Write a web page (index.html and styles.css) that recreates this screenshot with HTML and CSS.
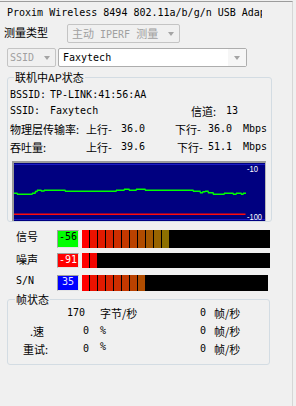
FILE: index.html
```html
<!DOCTYPE html>
<html lang="zh">
<head>
<meta charset="utf-8">
<title>Proxim Wireless</title>
<link rel="stylesheet" href="styles.css">
</head>
<body>
<div class="win">
  <div class="title">Proxim Wireless 8494 802.11a/b/g/n USB Adapter</div>

  <div class="row-mode">
    <span class="z lbl-mode">测量类型</span>
    <div class="combo dis combo-mode">
      <span class="cval"><span class="z">主动</span> IPERF <span class="z">测量</span></span>
      <span class="cbtn"><i class="arrow"></i></span>
    </div>
  </div>

  <div class="row-ssid">
    <div class="combo dis combo-ssid">
      <span class="cval">SSID</span>
      <span class="cbtn"><i class="arrow"></i></span>
    </div>
    <div class="combo combo-name">
      <span class="cval">Faxytech</span>
      <span class="cbtn btn-name"><i class="arrow"></i></span>
    </div>
  </div>

  <fieldset class="grp grp-ap">
    <legend class="z">联机中AP状态</legend>
    <div class="ap-row"><span class="w40">BSSID:</span><span>TP-LINK:41:56:AA</span></div>
    <div class="ap-row"><span class="w40">SSID:</span><span class="w141">Faxytech</span><span class="z w35">信道:</span><span>13</span></div>
    <div class="ap-row gap"><span class="z w76">物理层传输率:</span><span class="z w35">上行-</span><span class="w54">36.0</span><span class="z w33">下行-</span><span class="w35">36.0</span><span>Mbps</span></div>
    <div class="ap-row gap"><span class="z w76">吞吐量:</span><span class="z w35">上行-</span><span class="w56">39.6</span><span class="z w31">下行-</span><span class="w35">51.1</span><span>Mbps</span></div>
    <div class="graph">
      <svg class="plot" width="251" height="58" viewBox="14 163 251 58">
        <line x1="14" y1="164.5" x2="265" y2="164.5" stroke="#1c1cc4" stroke-width="1"/>
        <line x1="14" y1="219.5" x2="265" y2="219.5" stroke="#1c1cc4" stroke-width="1"/>
        <line x1="14" y1="214.2" x2="245.5" y2="214.2" stroke="#ff0a0a" stroke-width="1.5"/>
        <polyline fill="none" stroke="#00ff00" stroke-width="1.4" points="14,193.3 17,193.3 17.5,194.3 32,194.3 32.5,193.3 35,193.3 35.5,191.5 37,191.5 37.5,190.3 41,190.3 41.5,191 44,191 44.5,190.3 65,190.3 65.5,191.3 116,191.3 116.5,190.3 124,190.3 124.5,189.3 129,189.3 129.5,190.3 136,190.3 136.5,189.3 145,189.3 145.5,190.3 193,190.3 193.5,191.3 200,191.3 200.5,192.7 202.5,192.7 203,191.7 205,191.7 205.5,191.3 208,191.3 208.5,192.7 213,192.7 213.5,194.3 224,194.3 224.5,193.3 233,193.3 233.5,194.3 236,194.3 236.5,193.3 241,193.3 241.5,194.3 243,194.3 243.5,193.3 246,193.3"/>
        <text x="247" y="172" fill="#ffffff" font-family="Liberation Sans" font-size="9" textLength="11" lengthAdjust="spacingAndGlyphs">-10</text>
        <text x="247" y="220" fill="#ffffff" font-family="Liberation Sans" font-size="9" textLength="15" lengthAdjust="spacingAndGlyphs">-100</text>
      </svg>
    </div>
  </fieldset>

  <div class="meters">
    <div class="meter m-sig">
      <span class="z mlabel">信号</span>
      <span class="mval v-sig">-56</span>
      <div class="bar">
        <i class="seg c1"></i><i class="seg c2"></i><i class="seg c3"></i><i class="seg c4"></i><i class="seg c5"></i><i class="seg c6"></i><i class="seg c7"></i><i class="seg c8"></i><i class="seg c9"></i><i class="seg c10"></i><i class="seg c11"></i>
      </div>
    </div>
    <div class="meter m-noise">
      <span class="z mlabel">噪声</span>
      <span class="mval v-noise">-91</span>
      <div class="bar">
        <i class="seg c1"></i><i class="seg n2"></i>
      </div>
    </div>
    <div class="meter m-sn">
      <span class="mlabel">S/N</span>
      <span class="mval v-sn">35</span>
      <div class="bar bar-sn">
        <i class="seg c1"></i><i class="seg c2"></i><i class="seg c3"></i><i class="seg c4"></i><i class="seg c5"></i><i class="seg c6"></i><i class="seg c7"></i><i class="seg c8"></i>
      </div>
    </div>
  </div>

  <fieldset class="grp grp-fr">
    <legend class="z">帧状态</legend>
    <div class="fr-row"><span></span><span>170</span><span class="z">字节/秒</span><span>0</span><span class="z">帧/秒</span></div>
    <div class="fr-row"><span class="z lb2">.速</span><span class="n0">0</span><span>%</span><span>0</span><span class="z">帧/秒</span></div>
    <div class="fr-row"><span class="z lb3">重试:</span><span class="n0">0</span><span class="pct">%</span><span>0</span><span class="z">帧/秒</span></div>
  </fieldset>
</div>
</body>
</html>
```

FILE: styles.css
```css
* { box-sizing: border-box; }
html, body { margin: 0; padding: 0; }
body {
  background: #f0f0f0;
  width: 296px;
  height: 406px;
  overflow: hidden;
  font-family: "DejaVu Sans Mono", "Noto Sans CJK SC", monospace;
  font-size: 10px;
  color: #000;
}
.z {
  font-family: "Noto Sans CJK SC", "Noto Sans", sans-serif;
  font-size: 11px;
}
.win {
  width: 293px;
  height: 405px;
  margin-top: 1px;
  border-top: 1px solid #9c9c9c;
  border-right: 1px solid #d6d6d6;
}
.title {
  padding: 4px 0 0 7px;
  width: 262px;
  height: 18px;
  line-height: 14px;
  white-space: nowrap;
  overflow: hidden;
}

/* combos */
.row-mode {
  display: flex;
  align-items: flex-start;
  margin-top: 4px;
  height: 19px;
}
.lbl-mode {
  width: 67px;
  padding-left: 4px;
  line-height: 16px;
  flex: none;
}
.combo {
  display: flex;
  height: 19px;
  border: 1px solid #c4c4c4;
  border-radius: 2px;
  background: #f0f0f0;
  flex: none;
}
.cval {
  flex: 1;
  padding-left: 4px;
  line-height: 17px;
  white-space: nowrap;
  overflow: hidden;
}
.dis .cval { color: #a0a0a0; }
.cbtn {
  width: 17px;
  display: flex;
  align-items: center;
  justify-content: center;
  flex: none;
}
.arrow {
  width: 0;
  height: 0;
  border-left: 3.5px solid transparent;
  border-right: 3.5px solid transparent;
  border-top: 4px solid #a4a4a4;
  margin-top: 1px;
}
.combo-mode { width: 113px; }
.row-ssid {
  display: flex;
  gap: 2px;
  margin-top: 5px;
  padding-left: 7px;
}
.combo-ssid { width: 49px; }
.combo-ssid .cval { padding-left: 2px; }
.combo-ssid .cbtn { width: 16px; }
.combo-name {
  width: 189px;
  border-color: #adadad;
  background: #fff;
}
.btn-name { width: 18px; background: #f6f6f6; }

/* group boxes */
.grp {
  margin: 4px 0 0 7px;
  padding: 4px 2px 0;
  border: 1px solid #d3dce3;
  border-radius: 3px;
  min-width: 0;
}
.grp legend {
  padding: 0 1px;
  margin-left: 4px;
  line-height: 12px;
}
.grp-ap { width: 265px; }

.ap-row {
  display: flex;
  height: 16px;
  line-height: 16px;
  white-space: nowrap;
}
.ap-row.gap { margin-top: 2px; }
.ap-row span { flex: none; }
.w31 { width: 31px; }
.w33 { width: 33px; }
.w35 { width: 35px; }
.w40 { width: 40px; }
.w54 { width: 54px; }
.w56 { width: 56px; }
.w76 { width: 76px; }
.w141 { width: 141px; }

.graph {
  margin: 6px 0 0 2px;
  width: 254px;
  height: 60px;
  background: #000080;
  border-top: 2px solid #9a9a9a;
  border-left: 2px solid #9a9a9a;
  border-right: 1px solid #b8b8b8;
}
.plot { display: block; }

/* meters */
.meters { margin-top: 8px; }
.meter {
  display: flex;
  align-items: flex-start;
}
.m-sig { height: 18px; }
.m-noise { height: 15px; margin-top: 5px; }
.m-sn { height: 16px; margin-top: 7px; }
.mlabel {
  width: 57px;
  padding-left: 16px;
  line-height: 12px;
  flex: none;
}
.mval {
  width: 22px;
  height: 100%;
  margin-right: 3px;
  border: 1px solid;
  border-color: #a0a0a0 #e4e4e4 #e4e4e4 #a0a0a0;
  line-height: 12px;
  text-align: center;
  flex: none;
}
.v-sig { background: #00ff00; color: #000; }
.v-noise { background: #ff0000; color: #fff; }
.v-sn { background: #0000ff; color: #e8e8ff; }
.bar {
  width: 188px;
  height: 100%;
  background: #000;
  display: flex;
  gap: 1px;
  flex: none;
}
.bar-sn { width: 186px; }
.seg { width: 7px; height: 100%; }
.c1 { background: #ff0000; }
.c2 { background: #ec1200; }
.c3 { background: #e21a00; }
.c4 { background: #d82400; }
.c5 { background: #ce2e00; }
.c6 { background: #c43800; }
.c7 { background: #ba4200; }
.c8 { background: #b04c00; }
.c9 { background: #a45800; }
.c10 { background: #986400; }
.c11 { background: #8c7000; }
.n2 { background: #f20400; }

/* frame status */
.grp-fr {
  width: 263px;
  margin-top: 2px;
  padding: 0 2px 7px;
}
.grp-fr legend { margin-left: 5px; }
.fr-row {
  display: grid;
  grid-template-columns: 57px 33px 100px 14px auto;
  height: 16px;
  line-height: 16px;
  white-space: nowrap;
}
.fr-row + .fr-row { margin-top: 2px; }
.n0 { padding-left: 16px; }
.lb2 { padding-left: 20px; }
.lb3 { padding-left: 13px; }
.pct { line-height: 12px; }
```
